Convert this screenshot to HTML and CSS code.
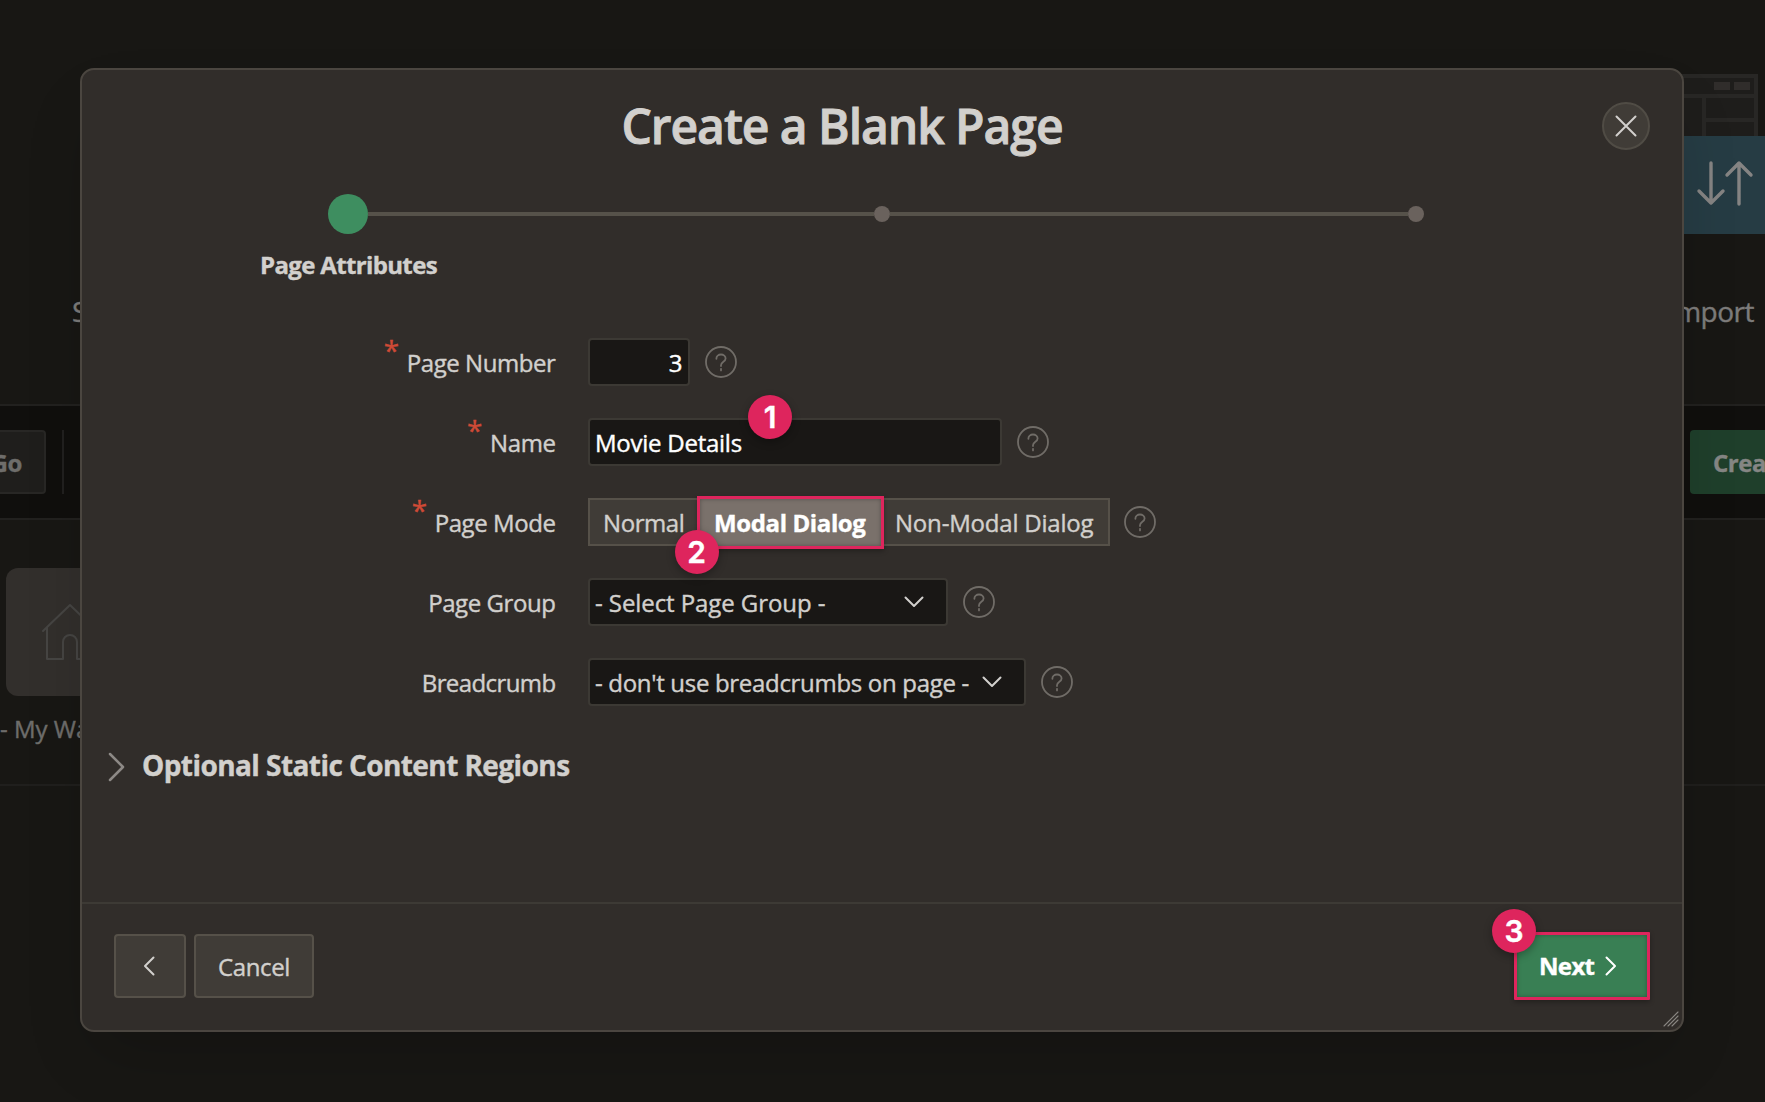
FILE: index.html
```
<!DOCTYPE html>
<html lang="en">
<head>
<meta charset="utf-8">
<title>Create a Blank Page</title>
<link rel="stylesheet" href="styles.css">
</head>
<body>
<svg class="defs" aria-hidden="true">
  <symbol id="help" viewBox="0 0 32 32"><circle cx="16" cy="16" r="15"/><path d="M11.4 12.8v-.3a4.6 4 0 0 1 9.2 0c0 3.4-4.6 3.2-4.6 6.8v.7"/><path d="M16 22.8v1.6"/></symbol>
  <symbol id="down" viewBox="0 0 20 12"><path d="M1.5 1.5 10 10l8.5-8.5"/></symbol>
</svg>

<main class="page">
  <section class="hub">
    <div class="hub-label">S</div>
    <div class="hub-card">
      <svg class="wire" width="160" height="62" viewBox="0 0 160 62">
        <rect x="2" y="2" width="154" height="70" class="wire-fill"/>
        <path d="M0 2h156v60M0 22h156M104 22v40M104 46h52" class="wire-line"/>
        <path d="M114 8h16v8h-16zM134 8h16v8h-16z" class="wire-btn"/>
      </svg>
      <div class="hub-icon">
        <svg width="60" height="50" viewBox="0 0 60 50"><path d="M16 5v40M4 33l12 12 12-12M44 46V5M32 17 44 5l12 12"/></svg>
      </div>
      <div class="hub-name">Import</div>
    </div>
  </section>
  <section class="toolbar">
    <div class="go">Go</div>
    <div class="sep"></div>
    <div class="create">Create</div>
  </section>
  <section class="apps">
    <div class="tile">
      <svg width="128" height="128" viewBox="0 0 128 128"><path d="M37 63 64 37l27 26M41 60v31h16V74a7 7 0 0 1 14 0v17h16V60"/></svg>
    </div>
    <div class="app-name">- My Wa</div>
  </section>
</main>

<div class="dialog" role="dialog">
  <header class="head">
    <h1>Create a Blank Page</h1>
    <button class="close" aria-label="Close"><svg width="24" height="24" viewBox="0 0 24 24"><path d="M2.5 2.5l19 19M21.5 2.5l-19 19"/></svg></button>
  </header>

  <div class="steps">
    <div class="track"><i class="now"></i><b></b><i></i><b></b><i></i></div>
    <div class="step-name">Page Attributes</div>
  </div>

  <form class="form">
    <label class="req"><em>*</em>Page Number</label>
    <div class="field"><span class="input num">3</span><svg class="help"><use href="#help"/></svg></div>

    <label class="req"><em>*</em>Name</label>
    <div class="field"><span class="input name">Movie Details<span class="badge b1">1</span></span><svg class="help"><use href="#help"/></svg></div>

    <label class="req"><em>*</em>Page Mode</label>
    <div class="field">
      <div class="pills"><span class="pill normal">Normal</span><span class="pill on">Modal Dialog<span class="badge b2">2</span></span><span class="pill non">Non-Modal Dialog</span></div>
      <svg class="help near"><use href="#help"/></svg>
    </div>

    <label>Page Group</label>
    <div class="field"><span class="input group"><span>- Select Page Group -</span><svg class="down"><use href="#down"/></svg></span><svg class="help"><use href="#help"/></svg></div>

    <label class="tight">Breadcrumb</label>
    <div class="field"><span class="input crumb"><span>- don't use breadcrumbs on page -</span><svg class="down"><use href="#down"/></svg></span><svg class="help"><use href="#help"/></svg></div>
  </form>

  <div class="more">
    <svg width="18" height="32" viewBox="0 0 18 32"><path d="M2 3l13 13L2 29"/></svg>
    <h2>Optional Static Content Regions</h2>
  </div>

  <footer class="foot">
    <button class="btn back" aria-label="Back"><svg width="12" height="20" viewBox="0 0 12 20"><path d="M10.5 1.5 2 10l8.500 8.500"/></svg></button>
    <button class="btn cancel">Cancel</button>
    <button class="btn next">Next<svg width="12" height="20" viewBox="0 0 12 20"><path d="M1.500 1.500 10 10l-8.500 8.500"/></svg><span class="badge b3">3</span></button>
  </footer>
  <svg class="grip" width="16" height="16" viewBox="0 0 16 16"><path d="M1 15 15 1M5 15 15 5M9 15l6-6"/></svg>
</div>
</body>
</html>
```
FILE: styles.css
```
* { box-sizing: border-box; }
body {
  margin: 0;
  width: 1765px;
  height: 1102px;
  overflow: hidden;
  background: #181714;
  color: #d2d0cd;
  font: 24px/32px "Open Sans", "Noto Sans", sans-serif;
  letter-spacing: -0.43px;
  -webkit-text-stroke: 0.4px;
}
svg { fill: none; stroke-linecap: round; stroke-linejoin: round; flex: none; display: block; }
.defs { width: 0; height: 0; position: absolute; }
h1, h2 { margin: 0; }

/* dimmed page behind the dialog */
.page { height: 1102px; overflow: hidden; color: #6e6d6b; }
.hub { height: 406px; border-bottom: 2px solid #22211f; display: flex; justify-content: space-between; font-size: 28px; color: #7d7c7b; }
.hub-label { padding: 295px 0 0 72px; }
.hub-card { width: 165px; padding-top: 74px; overflow: hidden; }
.wire-fill { fill: #1e1d1b; }
.wire-line { stroke: #282725; stroke-width: 4; stroke-linejoin: miter; }
.wire-btn { fill: #302d2b; }
.hub-icon { height: 98px; background: #263c44; padding: 22px 0 0 95px; }
.hub-icon path { stroke: #858483; stroke-width: 3.4; }
.hub-name { padding: 61px 11px 0 0; text-align: right; letter-spacing: -0.5px; }
.toolbar { height: 114px; background: #100f0d; border-bottom: 2px solid #22211f; display: flex; align-items: center; font-weight: 700; }
.go { width: 76px; height: 64px; margin-left: -30px; padding: 15px 22px 0 0; text-align: right; background: #1f1e1c; border: 2px solid #282725; border-radius: 4px; }
.sep { width: 2px; height: 64px; margin-left: 16px; background: #22211f; }
.create { width: 110px; height: 64px; margin: 0 -35px 0 auto; padding: 17px 0 0 23px; background: #1f3f2b; border-radius: 4px; color: #858684; }
.apps { height: 266px; padding: 48px 0 0 6px; border-bottom: 2px solid #201f1d; }
.tile { width: 128px; height: 128px; border-radius: 12px; background: #322f2c; }
.tile path { stroke: #464543; stroke-width: 2; }
.app-name { margin: 17px 0 0 -6px; letter-spacing: 0; }

/* dialog */
.dialog {
  position: absolute;
  left: 80px;
  top: 68px;
  width: 1604px;
  height: 964px;
  display: flex;
  flex-direction: column;
  background: #312d2a;
  border: 2px solid #4b4640;
  border-radius: 14px;
  box-shadow: 0 32px 64px -16px rgba(0, 0, 0, .2);
}
.head { height: 112px; padding: 32px 32px 0 0; display: flex; }
h1 { flex: 1; padding: 0; text-align: center; font-size: 48px; line-height: 48px; font-weight: 600; letter-spacing: -1.05px; -webkit-text-stroke: 0.9px; }
.close { width: 48px; height: 48px; padding: 0; display: grid; place-items: center; border: 2px solid #504c45; border-radius: 50%; background: #403c37; }
.close path { stroke: #d2d0cd; stroke-width: 2; }

.steps { height: 156px; padding-left: 246px; }
.track { width: 1096px; height: 64px; display: flex; align-items: center; }
.track i { width: 16px; height: 16px; border-radius: 50%; background: #6a625d; }
.track .now { width: 40px; height: 40px; background: #3e8e60; }
.track b { flex: 1; height: 4px; background: #56524a; }
.track .now + b { flex: 0 0 506px; }
.step-name { width: 240px; margin: 3px 0 0 -99.500px; text-align: center; font-weight: 700; letter-spacing: -0.65px; }

.form { display: grid; grid-template-columns: 474px 1fr; column-gap: 32px; grid-auto-rows: 48px; row-gap: 32px; align-items: center; }
label { display: flex; justify-content: flex-end; padding: 2px 0.500px 0 0; }
.tight { letter-spacing: -0.6px; }
em { margin: -13px 8px 0 0; font: 28px/32px "Open Sans", sans-serif; color: #cf4a36; }
.field { height: 48px; display: flex; align-items: center; }
.input { position: relative; height: 48px; padding: 7px 6px 0 5px; display: flex; background: #191715; border: 2px solid #3c3934; border-radius: 4px; white-space: nowrap; }
.num { width: 102px; justify-content: flex-end; color: #fff; }
.name { width: 414px; color: #fff; letter-spacing: -0.25px; }
.group { width: 360px; justify-content: space-between; padding-right: 22px; letter-spacing: -0.08px; }
.crumb { width: 438px; justify-content: space-between; padding-right: 22px; letter-spacing: -0.31px; }
.down { width: 20px; height: 12px; margin-top: 9px; stroke: #d2d0cd; stroke-width: 2; }
.help { width: 32px; height: 32px; margin-left: 15px; stroke: #706c67; stroke-width: 1.8; }
.help.near { margin-left: 14px; }

.pills { display: flex; }
.pill { height: 48px; padding: 7px 0 0; background: #403c37; border: solid #565149; border-width: 2px 0; white-space: nowrap; }
.normal { width: 108.500px; padding-left: 13px; border-left-width: 2px; }
.on { position: relative; width: 187.500px; height: 53px; margin: -2px 0 -3px; padding: 8px 0 0 14.500px; background: #7a716b; border: 3px solid #de255d; color: #fff; font-weight: 700; letter-spacing: -0.38px; box-shadow: 0 2px 5px rgba(0, 0, 0, .3), inset 0 0 4px rgba(0, 0, 0, .3); }
.non { width: 226px; padding-left: 11px; border-right-width: 2px; letter-spacing: -0.2px; }

.more { margin-top: 43px; padding-left: 25.500px; display: flex; align-items: center; gap: 16.500px; }
.more path { stroke: #8d8986; stroke-width: 2.5; }
h2 { padding-bottom: 3px; font-size: 28px; line-height: 32px; font-weight: 700; letter-spacing: -0.57px; }

.foot { margin-top: auto; height: 128px; padding: 30px 32px 28px; display: flex; gap: 8px; border-top: 2px solid #3d3a35; }
.btn { height: 64px; padding: 1px 0 0; font: inherit; letter-spacing: -0.4px; color: #d2d0cd; background: #403c37; border: 2px solid #565149; border-radius: 4px; -webkit-text-stroke: inherit; }
.btn path { stroke: #d2d0cd; stroke-width: 2; }
.back { width: 72px; padding: 0 0 0 24px; }
.back svg { margin-left: 3px; }
.cancel { width: 120px; }
.btn.next { position: relative; width: 136px; height: 68px; margin: -2px 0 0 auto; padding: 0 0 0 22px; display: flex; align-items: center; gap: 11px; border: 3px solid #de255d; border-radius: 1px; background: #397f54; color: #fff; font-weight: 700; letter-spacing: -0.65px; box-shadow: 0 2px 5px rgba(0, 0, 0, .3), inset 0 0 4px rgba(0, 0, 0, .3); }
.btn.next path { stroke: #fff; }
.grip { position: absolute; right: 3px; bottom: 3px; stroke: #8a8783; stroke-width: 1.1; }

/* numbered callouts */
.badge { position: absolute; width: 44px; height: 44px; border-radius: 50%; background: #de255d; color: #fff; font: 600 30px/44px Inter, sans-serif; text-align: center; letter-spacing: 0; box-shadow: 0 3px 8px rgba(0, 0, 0, .3); }
.b1 { left: 158px; top: -25px; }
.b2 { left: -25px; top: 31px; z-index: 1; }
.b3 { left: -25px; top: -26px; }
```
